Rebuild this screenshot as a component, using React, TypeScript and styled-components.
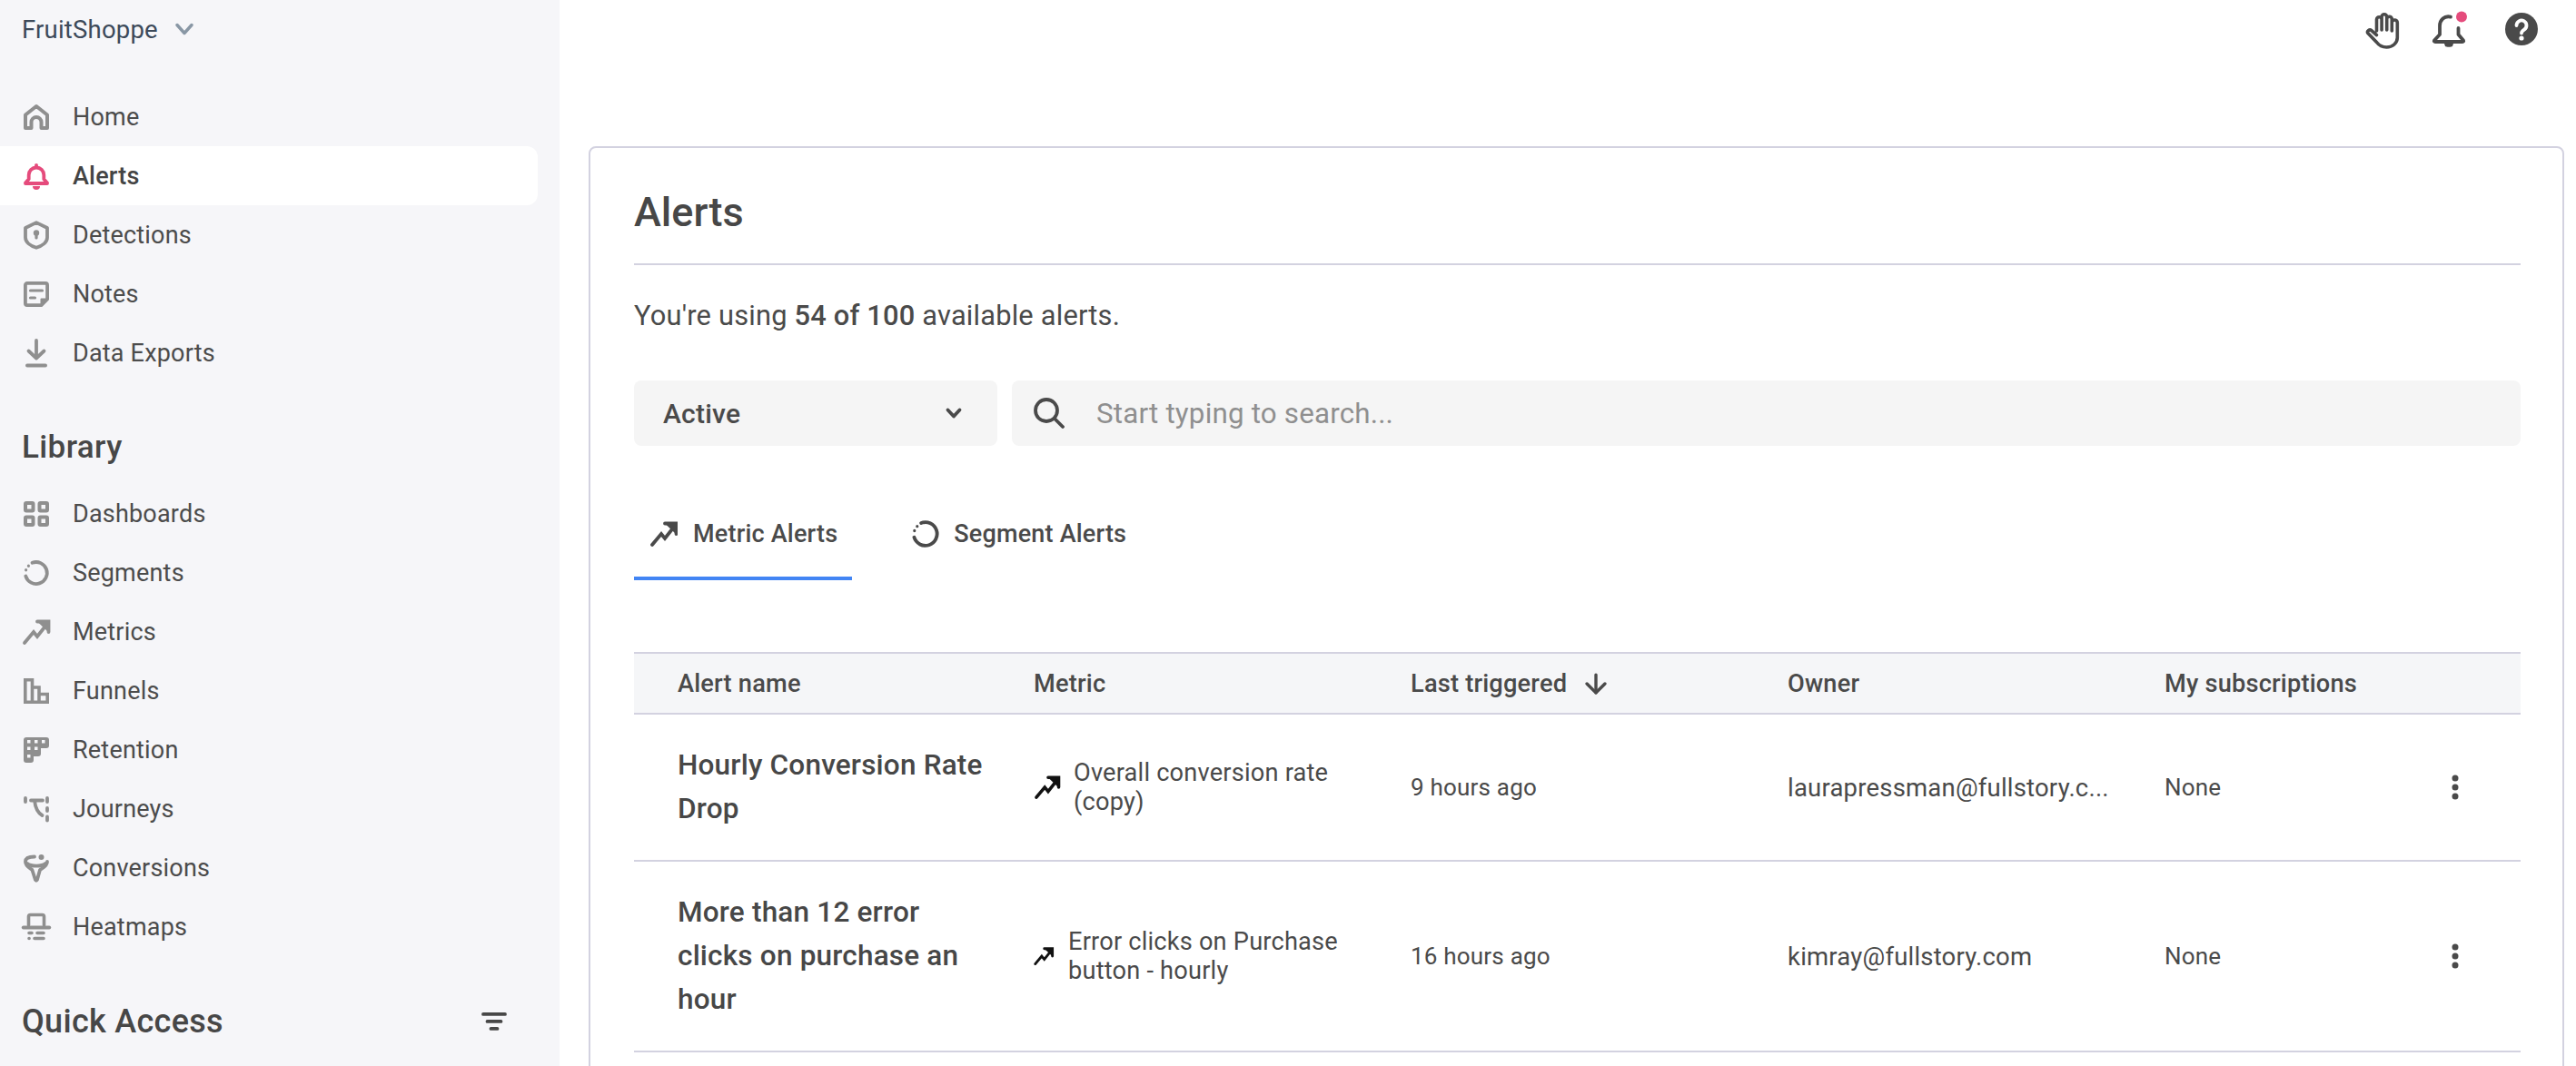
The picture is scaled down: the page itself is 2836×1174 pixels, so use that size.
import React from "react";
import styled, { createGlobalStyle } from "styled-components";
import { ArrowDown } from "lucide-react";

const Global = createGlobalStyle`
  html, body { margin: 0; padding: 0; background: #fff; }
  body { font-family: Roboto, "Liberation Sans", sans-serif; color: #4a4a4a; }
  #root { height: 1174px; overflow: hidden; }
`;

const Page = styled.div`display: flex; height: 1174px; overflow: hidden;`;
const Sidebar = styled.aside`width: 616px; flex: none; background: #f6f6f9;`;
const OrgSwitcher = styled.div`
  height: 64px; margin-bottom: 32px; padding-left: 24px; display: flex; align-items: center; gap: 19px;
  font-size: 27.5px; letter-spacing: .2px; color: #3d4a5a;
`;
const NavList = styled.nav`display: flex; flex-direction: column; width: 592px;`;
const NavRow = styled.div<{ $active?: boolean }>`
  height: 65px; display: flex; align-items: center; gap: 26px; padding-left: 26px; box-sizing: border-box;
  font-size: 27px; letter-spacing: .2px; font-weight: ${p => (p.$active ? 500 : 400)};
  color: ${p => (p.$active ? "#444" : "#4c4c4c")};
  background: ${p => (p.$active ? "#fff" : "transparent")};
  border-radius: 0 12px 12px 0;
`;
const NavIcon = styled.span<{ $active?: boolean }>`
  width: 28px; height: 32px; flex: none; display: flex; align-items: center; justify-content: center;
  color: ${p => (p.$active ? "#e54b7c" : "#8f8f8f")};
  svg { display: block; overflow: visible; }
`;
const SideHeading = styled.h3`
  margin: 0; padding: 52px 0 20px 24px; font-size: 35px; line-height: 40px; font-weight: 500; color: #474747;
  letter-spacing: .4px;
`;
const QuickHeading = styled.div`
  display: flex; align-items: center; justify-content: space-between; padding: 52px 58px 0 24px;
  font-size: 36px; line-height: 40px; font-weight: 500; color: #474747; letter-spacing: .3px;
`;
const Main = styled.main`flex: 1; min-width: 0; padding: 0 13px 0 32px; display: flex; flex-direction: column;`;
const TopBar = styled.header`
  height: 161px; flex: none; box-sizing: border-box; display: flex; justify-content: flex-end; align-items: flex-start;
  gap: 36px; padding: 14px 29px 0 0; color: #4a4a4a;
  svg { display: block; overflow: visible; }
`;
const HelpSlot = styled.span`margin-left: 8px;`;
const Card = styled.section`
  flex: none; min-height: 1100px; box-sizing: border-box; border: 2px solid #d3d2e0; border-radius: 8px; padding: 0 46px 0 48px;
`;
const TitleBlock = styled.div`border-bottom: 2px solid #d3d2e0; padding: 51px 0 36px;`;
const Title = styled.h1`margin: 0; font-size: 45px; line-height: 40px; font-weight: 500; color: #474747;`;
const Usage = styled.p`
  margin: 36px 0 0; font-size: 30.8px; line-height: 40px; color: #4a4a4a; letter-spacing: .2px;
  strong { font-weight: 500; }
`;
const Filters = styled.div`display: flex; gap: 16px; margin-top: 51px; height: 72px;`;
const SelectBox = styled.div`
  width: 400px; flex: none; box-sizing: border-box; background: #f5f5f5; border-radius: 8px; display: flex;
  align-items: center; justify-content: space-between; padding: 0 38px 0 32px;
  font-size: 30px; font-weight: 500; color: #4a4a4a; letter-spacing: .2px;
`;
const SearchBox = styled.div`
  flex: 1; background: #f5f5f5; border-radius: 8px; display: flex; align-items: center; gap: 35px; padding-left: 24px;
  font-size: 31.3px; color: #8f8f8f; letter-spacing: .2px;
`;
const Tabs = styled.div`display: flex; gap: 66px; margin-top: 44px; height: 104px;`;
const Tab = styled.div<{ $active?: boolean }>`
  box-sizing: border-box; height: 104px; padding: 6px 16px 0 18px; display: flex; align-items: center; gap: 17px;
  font-size: 27px; font-weight: 500; color: #4a4a4a; letter-spacing: .2px;
  border-bottom: 4px solid ${p => (p.$active ? "#4285f4" : "transparent")};
`;
const SegmentTab = styled(Tab)`padding-left: 0; gap: 16px;`;
const Table = styled.div`margin-top: 79px;`;
const columns = "440px 415px 415px 415px 1fr";
const HeadRow = styled.div`
  display: grid; grid-template-columns: ${columns}; align-items: center; height: 69px; box-sizing: border-box;
  border-top: 2px solid #d3d2e0; border-bottom: 2px solid #d3d2e0; background: #f5f6f8;
  font-size: 27.2px; font-weight: 500; color: #4a4a4a; letter-spacing: .2px;
`;
const HeadCell = styled.div<{ $first?: boolean }>`
  padding-left: ${p => (p.$first ? "48px" : "0")}; display: flex; align-items: center; gap: 15px;
`;
const Row = styled.div`
  display: grid; grid-template-columns: ${columns}; align-items: center; box-sizing: border-box;
  border-bottom: 2px solid #d3d2e0; padding: 32px 0; font-size: 26px; color: #4a4a4a; letter-spacing: .2px;
`;
const AlertName = styled.div`
  padding: 0 50px 0 48px; font-size: 31.5px; line-height: 48px; font-weight: 500; color: #474747; letter-spacing: .2px;
`;
const MetricCell = styled.div<{ $gap: number }>`
  display: flex; align-items: center; gap: ${p => p.$gap}px; line-height: 32px; padding-right: 60px; font-size: 27.2px;
  svg { flex: none; display: block; overflow: visible; }
`;
const Owner = styled.div`white-space: nowrap; font-size: 27.5px;`;
const LastCell = styled.div`display: flex; justify-content: space-between; align-items: center; padding-right: 68px;`;

const S = { fill: "none", stroke: "currentColor", strokeLinecap: "round" as const, strokeLinejoin: "round" as const };

const HomeIcon = () => (
  <svg width="28" height="28" viewBox="0 0 28 28" {...S} strokeWidth="4">
    <path d="M2 26V11.500L14 2l12 9.500V26h-6.500v-6.500a5.500 5.500 0 0 0-11 0V26z" />
  </svg>
);
const BellIcon = () => (
  <svg width="28" height="28" viewBox="0 0 28 28" {...S} strokeWidth="3.800">
    <path d="M14 4.500a8.300 8.300 0 0 0-8.300 8.300v4.400L2 21.500V22h24v-.5l-3.700-4.300v-4.400A8.300 8.300 0 0 0 14 4.500z" />
    <path d="M14 1.800v2.400" />
    <path d="M10 25h8a4 4 0 0 1-8 0z" fill="currentColor" stroke="none" />
  </svg>
);
const ShieldIcon = () => (
  <svg width="28" height="32" viewBox="0 0 28 32" {...S} strokeWidth="3.800">
    <path d="M14 2.100 26 8v10.500c0 5.300-5.500 9.400-12 11.300C7.500 27.900 2 23.800 2 18.500V8z" />
    <circle cx="14" cy="13.500" r="3.200" fill="currentColor" stroke="none" />
    <path d="M14 14v5" strokeWidth="3.200" />
  </svg>
);
const NotesIcon = () => (
  <svg width="28" height="28" viewBox="0 0 28 28" {...S} strokeWidth="3.800">
    <path d="M3.900 1.900h20.200a2 2 0 0 1 2 2v15.600l-6.600 6.600H3.900a2 2 0 0 1-2-2V3.900a2 2 0 0 1 2-2z" />
    <path d="M7.500 10h13" strokeWidth="3.200" />
    <path d="M7.500 18h5" strokeWidth="3.200" />
    <path d="M26 19.500h-6.500V26" fill="currentColor" strokeWidth="2" />
  </svg>
);
const ExportIcon = () => (
  <svg width="28" height="32" viewBox="0 0 28 32" {...S} strokeWidth="3.800">
    <path d="M14 2v19M5.500 13.500 14 21.500l8.500-8" />
    <path d="M4 29.500h20" strokeWidth="4" />
  </svg>
);
const GridIcon = () => (
  <svg width="28" height="28" viewBox="0 0 28 28" {...S} strokeWidth="4">
    <rect x="2" y="2" width="8.500" height="8.500" rx="1" />
    <rect x="17.500" y="2" width="8.500" height="8.500" rx="1" />
    <rect x="2" y="17.500" width="8.500" height="8.500" rx="1" />
    <rect x="17.500" y="17.500" width="8.500" height="8.500" rx="1" />
  </svg>
);
const SegmentIcon = ({ size = 28, sw = 3.800 }: { size?: number; sw?: number }) => (
  <svg width={size} height={size} viewBox="0 0 28 28" {...S} strokeWidth={sw}>
    <path d="M9.500 2.800A12 12 0 1 1 2.300 17.500" />
    <path d="M5.400 6.200v.1M2.600 10.700v.1" strokeWidth={sw - 0.6} />
  </svg>
);
const TrendIcon = ({ w = 30, h = 28, sw = 3.800, color }: { w?: number; h?: number; sw?: number; color?: string }) => (
  <svg width={w} height={h} viewBox="0 0 30 28" fill="none" stroke={color ?? "currentColor"} strokeWidth={sw} strokeLinecap="round" strokeLinejoin="miter">
    <path d="M2 26 12 14l4 5L27 5" />
    <path d="M17 3.500h11v10.500z" fill={color ?? "currentColor"} stroke="none" />
    <path d="M16 2.500h12.500V14" />
  </svg>
);
const FunnelIcon = () => (
  <svg width="28" height="28" viewBox="0 0 28 28" {...S} strokeWidth="3.600" strokeLinejoin="miter" strokeLinecap="butt">
    <path d="M1.800 1.800h7.700v24.400H1.800zM9.500 10h7.500v16.200H9.500zM17 17.500h9.200v8.700H17z" />
  </svg>
);
const RetentionIcon = () => (
  <svg width="28" height="28" viewBox="0 0 28 28">
    <path fill="currentColor" d="M3 0h22a3 3 0 0 1 3 3v6a3 3 0 0 1-3 3h-6v6a3 3 0 0 1-3 3h-5v4a3 3 0 0 1-3 3H3a3 3 0 0 1-3-3V3a3 3 0 0 1 3-3z" />
    <g fill="#f6f6f9">
      <rect x="4" y="3" width="3.500" height="3.500" /><rect x="12" y="3" width="3.500" height="3.500" /><rect x="20" y="3" width="3.500" height="3.500" />
      <rect x="4" y="10.500" width="3.500" height="3.500" /><rect x="12" y="10.500" width="3.500" height="3.500" />
      <rect x="4" y="19" width="3.500" height="3.500" />
    </g>
  </svg>
);
const JourneyIcon = () => (
  <svg width="28" height="28" viewBox="0 0 28 28" {...S} strokeWidth="3.800">
    <path d="M2 2v4M26 2v4M26 13v3M26 22.500v4" />
    <path d="M8 4.500h13M12 4.500c1 9 4 14 8.500 16.500" />
  </svg>
);
const ConversionIcon = () => (
  <svg width="28" height="30" viewBox="0 0 28 30" {...S} strokeWidth="3.800">
    <path d="M12 2.500C6 2.500 2 4.500 2 8c0 5 5 7 7.400 9l3.500 11c.5 1 1.500 1 2 0L18 17c2.500-2 8-4 8-9" />
    <path d="M4 10c4 3.500 16 3.500 20 0" />
    <circle cx="19.500" cy="3" r="3" fill="currentColor" stroke="none" />
  </svg>
);
const HeatmapIcon = () => (
  <svg width="32" height="30" viewBox="0 0 32 30" {...S} strokeWidth="3.600">
    <path d="M7.500 13V3.500a2 2 0 0 1 2-2h13a2 2 0 0 1 2 2V13" />
    <path d="M1.800 15.500h28.400" strokeWidth="4" />
    <path d="M8 21.500h3M17 21.500h7M8 27.500h.1M14 27.500h10" />
  </svg>
);
const FilterIcon = () => (
  <svg width="28" height="20" viewBox="0 0 28 20" fill="none" stroke="#474747" strokeWidth="3.800" strokeLinecap="round">
    <path d="M2 1.900h24M6.500 9.900h15M10.500 17.900h7" />
  </svg>
);
const OrgChevron = () => (
  <svg width="20" height="14" viewBox="0 0 20 14" fill="none" stroke="#8997a5" strokeWidth="3.400" strokeLinecap="round" strokeLinejoin="round">
    <path d="M2 2.500 10 11.500 18 2.500" />
  </svg>
);
const HandIcon = () => (
  <svg width="38" height="40" viewBox="0 0 38 40" fill="none" stroke="#4a4a4a" strokeWidth="3.600" strokeLinecap="round" strokeLinejoin="round">
    <path d="M12.500 20V7.500a2.800 2.800 0 0 1 5.600 0V19M18.100 18V4.600a2.800 2.800 0 0 1 5.600 0V19M23.700 19V7a2.800 2.800 0 0 1 5.600 0v13M29.300 20v-9a3 3 0 0 1 6 0v16.500C35.300 33.500 30 38 23.500 38c-5.500 0-8-1.500-11-5.500L3.100 22.800c-1.900-2.300 1.500-5.200 3.800-3.200l5.600 5" />
  </svg>
);
const TopBell = () => (
  <svg width="36" height="38" viewBox="0 0 36 38" fill="none" stroke="#4a4a4a" strokeWidth="3.800" strokeLinecap="round" strokeLinejoin="round">
    <path d="M20 4.600C13 3 8 8 8 14.500v9.500L2 30.500c-.6 1 0 1.500 1 1.500h30c1 0 1.600-.5 1-1.500L28.500 24v-7" />
    <path d="M14 37c1 1 7 1 8 0l1-3H13z" fill="#4a4a4a" stroke="none" />
    <circle cx="32" cy="4.500" r="6" fill="#e54b7c" stroke="none" />
  </svg>
);
const HelpIcon = () => (
  <svg width="36" height="36" viewBox="0 0 36 36">
    <circle cx="18" cy="18" r="18" fill="#4a4a4a" />
    <path d="M12.500 14a5.500 5.500 0 1 1 8.500 4.600c-2 1.300-3 2-3 4" fill="none" stroke="#fff" strokeWidth="3.800" strokeLinecap="round" />
    <circle cx="18" cy="28" r="2.600" fill="#fff" />
  </svg>
);
const SmallChevron = () => (
  <svg width="20" height="14" viewBox="0 0 20 14" fill="none" stroke="#4a4a4a" strokeWidth="3.800" strokeLinecap="round" strokeLinejoin="round" style={{ display: "block" }}>
    <path d="M3.500 3.500 10 10.500 16.500 3.500" />
  </svg>
);
const SearchIcon = () => (
  <svg width="34" height="34" viewBox="0 0 34 34" fill="none" stroke="#4a4a4a" strokeWidth="3.800" strokeLinecap="round" style={{ display: "block", flex: "none" }}>
    <circle cx="14" cy="14" r="12" />
    <path d="M23 23 32 32" />
  </svg>
);
const KebabIcon = () => (
  <svg width="8" height="28" viewBox="0 0 8 28" fill="#4a4a4a" style={{ display: "block" }}>
    <circle cx="4" cy="4" r="3.500" /><circle cx="4" cy="14" r="3.500" /><circle cx="4" cy="24" r="3.500" />
  </svg>
);

const mainNav = [
  { label: "Home", icon: <HomeIcon /> },
  { label: "Alerts", icon: <BellIcon />, active: true },
  { label: "Detections", icon: <ShieldIcon /> },
  { label: "Notes", icon: <NotesIcon /> },
  { label: "Data Exports", icon: <ExportIcon /> },
];
const libraryNav = [
  { label: "Dashboards", icon: <GridIcon /> },
  { label: "Segments", icon: <SegmentIcon /> },
  { label: "Metrics", icon: <TrendIcon /> },
  { label: "Funnels", icon: <FunnelIcon /> },
  { label: "Retention", icon: <RetentionIcon /> },
  { label: "Journeys", icon: <JourneyIcon /> },
  { label: "Conversions", icon: <ConversionIcon /> },
  { label: "Heatmaps", icon: <HeatmapIcon /> },
];

type NavItem = { label: string; icon: React.ReactNode; active?: boolean };
const Nav = ({ items }: { items: NavItem[] }) => (
  <NavList>
    {items.map(i => (
      <NavRow key={i.label} $active={i.active}>
        <NavIcon $active={i.active}>{i.icon}</NavIcon>
        {i.label}
      </NavRow>
    ))}
  </NavList>
);

const rows = [
  {
    name: "Hourly Conversion Rate Drop",
    metric: <>Overall conversion rate<br />(copy)</>,
    icon: <TrendIcon w={30} h={26} sw={3.800} color="#111" />,
    gap: 14,
    last: "9 hours ago",
    owner: "laurapressman@fullstory.c...",
  },
  {
    name: "More than 12 error clicks on purchase an hour",
    metric: <>Error clicks on Purchase<br />button - hourly</>,
    icon: <TrendIcon w={22} h={20} sw={4} color="#111" />,
    gap: 16,
    last: "16 hours ago",
    owner: "kimray@fullstory.com",
  },
];

export default function App() {
  return (
    <Page>
      <Global />
      <Sidebar>
        <OrgSwitcher>FruitShoppe <OrgChevron /></OrgSwitcher>
        <Nav items={mainNav} />
        <SideHeading>Library</SideHeading>
        <Nav items={libraryNav} />
        <QuickHeading>Quick Access <FilterIcon /></QuickHeading>
      </Sidebar>
      <Main>
        <TopBar>
          <HandIcon />
          <TopBell />
          <HelpSlot><HelpIcon /></HelpSlot>
        </TopBar>
        <Card>
          <TitleBlock><Title>Alerts</Title></TitleBlock>
          <Usage>You're using <strong>54 of 100</strong> available alerts.</Usage>
          <Filters>
            <SelectBox>Active <SmallChevron /></SelectBox>
            <SearchBox><SearchIcon />Start typing to search...</SearchBox>
          </Filters>
          <Tabs>
            <Tab $active><TrendIcon w={30} h={28} />Metric Alerts</Tab>
            <SegmentTab><SegmentIcon size={30} sw={3.600} />Segment Alerts</SegmentTab>
          </Tabs>
          <Table>
            <HeadRow>
              <HeadCell $first>Alert name</HeadCell>
              <HeadCell>Metric</HeadCell>
              <HeadCell>Last triggered <ArrowDown size={34} strokeWidth={2.400} /></HeadCell>
              <HeadCell>Owner</HeadCell>
              <HeadCell>My subscriptions</HeadCell>
            </HeadRow>
            {rows.map(r => (
              <Row key={r.name}>
                <AlertName>{r.name}</AlertName>
                <MetricCell $gap={r.gap}>{r.icon}<span>{r.metric}</span></MetricCell>
                <div>{r.last}</div>
                <Owner>{r.owner}</Owner>
                <LastCell>None <KebabIcon /></LastCell>
              </Row>
            ))}
          </Table>
        </Card>
      </Main>
    </Page>
  );
}
